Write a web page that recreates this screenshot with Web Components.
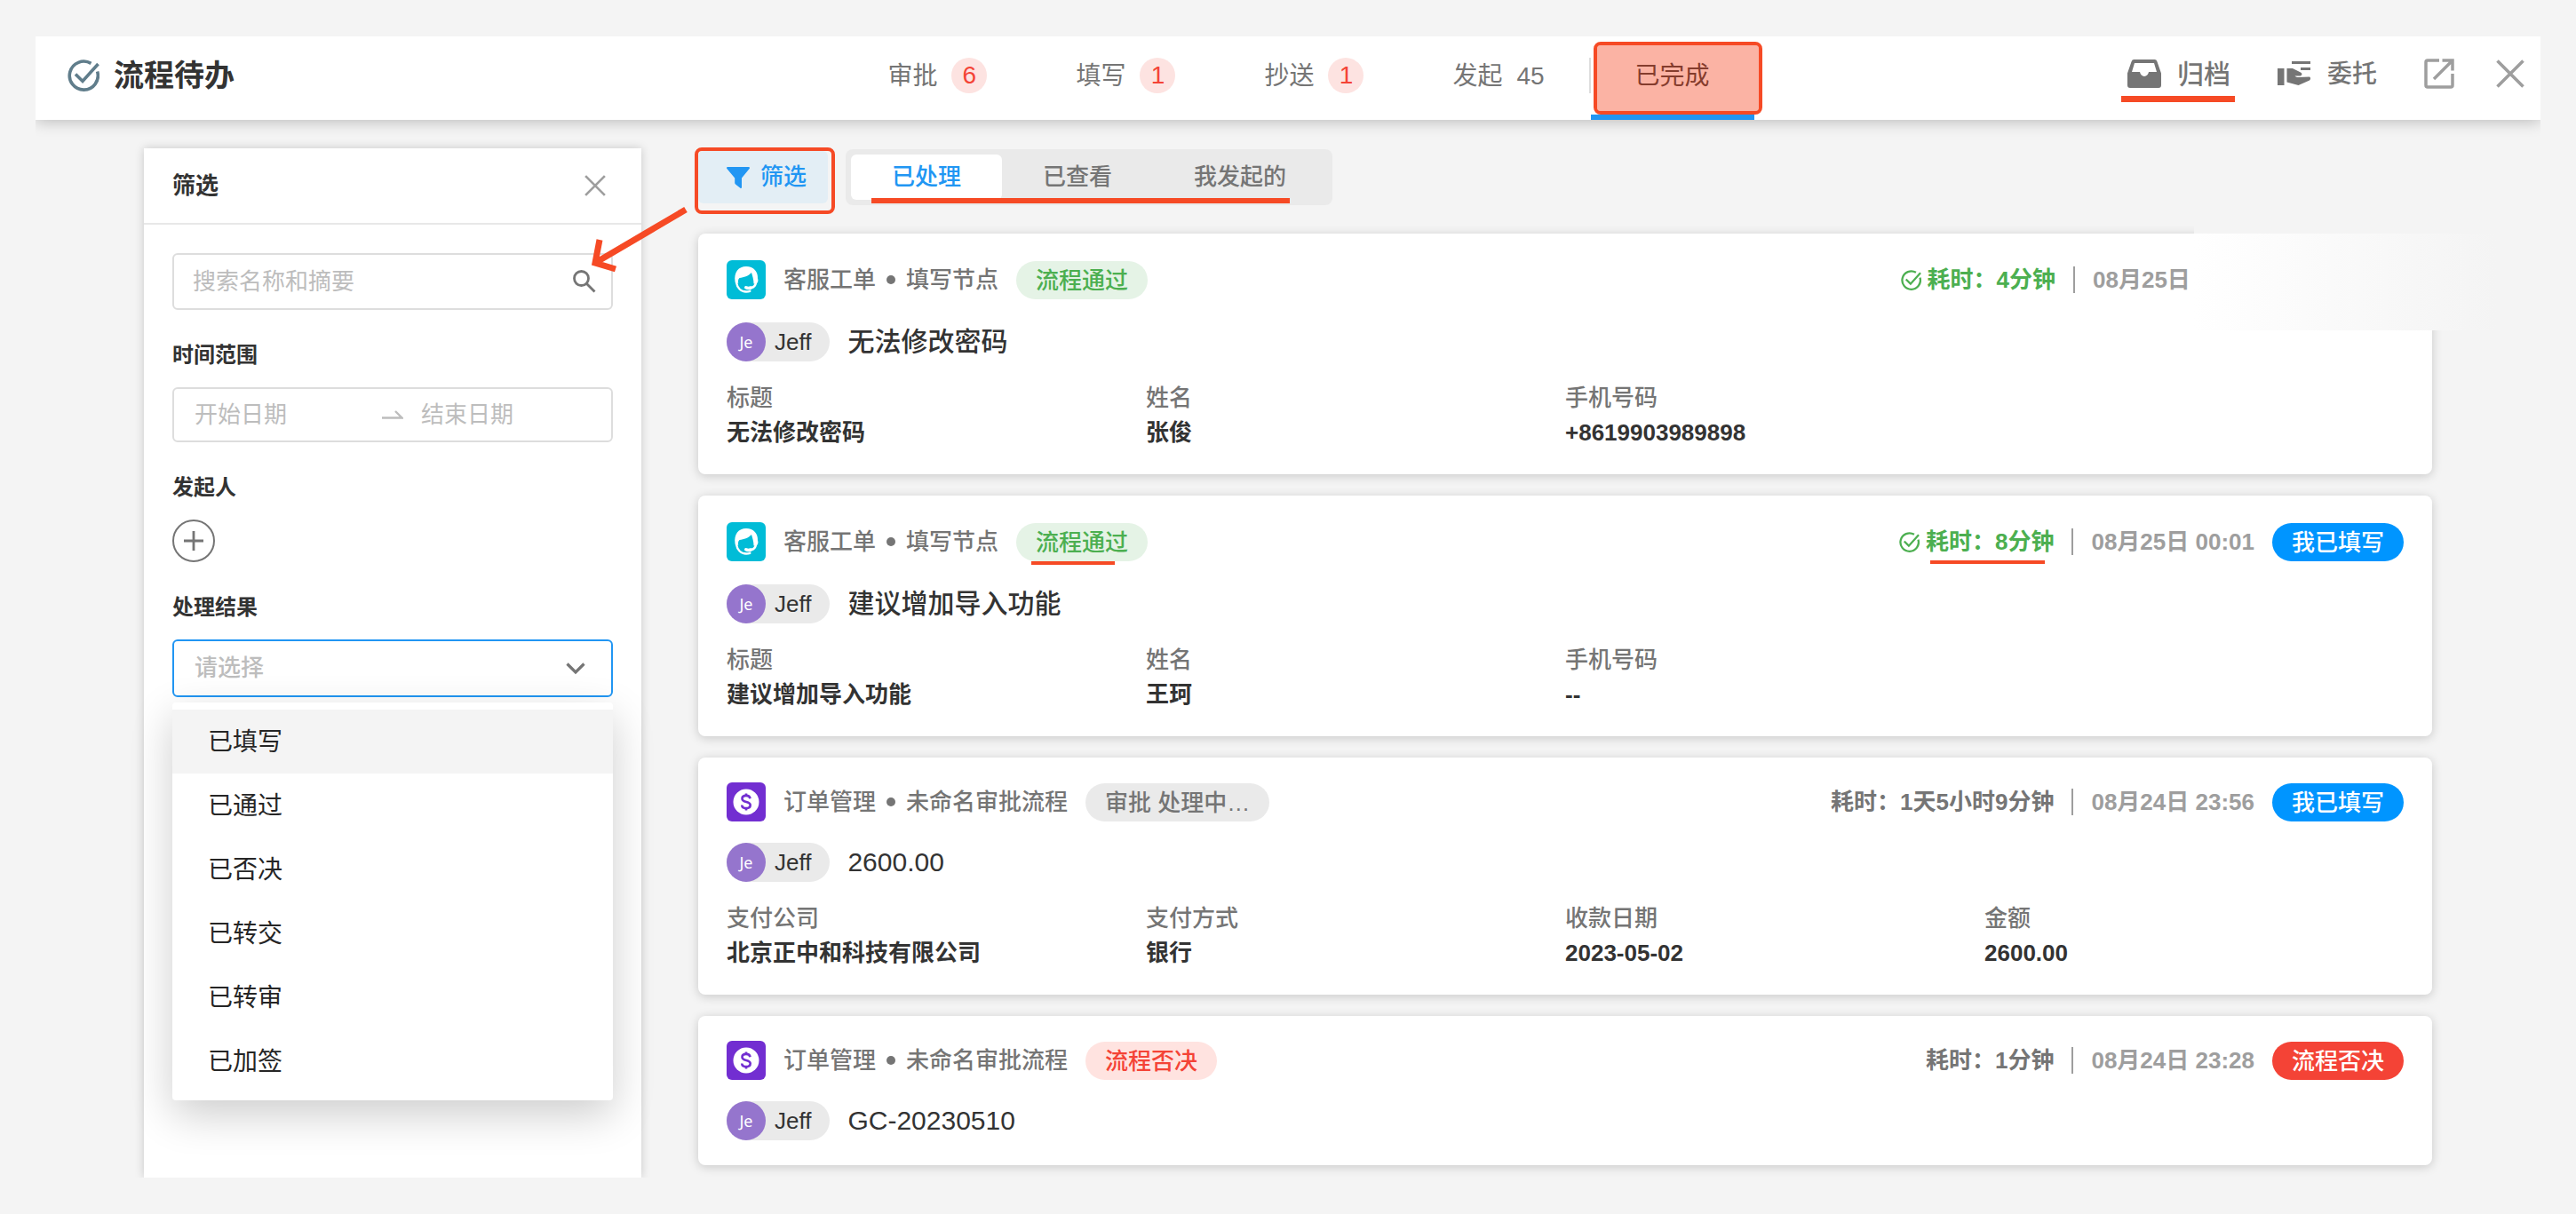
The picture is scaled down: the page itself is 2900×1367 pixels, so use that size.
<!DOCTYPE html>
<html lang="zh-CN">
<head>
<meta charset="utf-8">
<title>流程待办</title>
<style>
  body {
    margin: 0;
    padding: 41px 40px 40px;
    background: #f4f4f4;
    color: #333;
    font: 26px/39px "Liberation Sans", "Noto Sans CJK SC", sans-serif;
    --mark: #f64a25;
    --blue: #2196f3;
    --grey: #757575;
  }
  main { display: flex; gap: 64px; padding: 32px 122px 0; }
  filter-panel { flex: 0 0 560px; min-width: 0; }
  .list { flex: 1; min-width: 0; padding: 1px 0 14px; }
  .cards { display: flex; flex-direction: column; gap: 24px; margin-top: 32px; }
</style>
</head>
<body>
<todo-header heading="流程待办">
  <nav-tab label="审批" badge="6"></nav-tab>
  <nav-tab label="填写" badge="1"></nav-tab>
  <nav-tab label="抄送" badge="1"></nav-tab>
  <nav-tab label="发起" count="45"></nav-tab>
  <nav-tab label="已完成" active></nav-tab>
</todo-header>
<main>
  <filter-panel></filter-panel>
  <section class="list">
    <list-toolbar></list-toolbar>
    <div class="cards">
      <task-card icon="headset" app="客服工单" node="填写节点" status="流程通过" tone="green" user="Jeff" heading="无法修改密码" duration="4分钟" passed date="08月25日" faded>
        <task-field label="标题">无法修改密码</task-field>
        <task-field label="姓名">张俊</task-field>
        <task-field label="手机号码">+8619903989898</task-field>
      </task-card>
      <task-card icon="headset" app="客服工单" node="填写节点" status="流程通过" tone="green" user="Jeff" heading="建议增加导入功能" duration="8分钟" passed marked date="08月25日 00:01" result="我已填写" result-tone="blue">
        <task-field label="标题">建议增加导入功能</task-field>
        <task-field label="姓名">王珂</task-field>
        <task-field label="手机号码">--</task-field>
      </task-card>
      <task-card icon="dollar" app="订单管理" node="未命名审批流程" status="审批 处理中…" tone="grey" user="Jeff" heading="2600.00" duration="1天5小时9分钟" date="08月24日 23:56" result="我已填写" result-tone="blue">
        <task-field label="支付公司">北京正中和科技有限公司</task-field>
        <task-field label="支付方式">银行</task-field>
        <task-field label="收款日期">2023-05-02</task-field>
        <task-field label="金额">2600.00</task-field>
      </task-card>
      <task-card icon="dollar" app="订单管理" node="未命名审批流程" status="流程否决" tone="rose" user="Jeff" heading="GC-20230510" duration="1分钟" date="08月24日 23:28" result="流程否决" result-tone="red"></task-card>
    </div>
  </section>
</main>
<script>
const ICONS = {
  check: ['0 0 36 36', '<g fill="none" stroke="currentColor" stroke-width="3.6"><path d="M26.5 4.4A16 16 0 1 0 33.6 13.5"/><path d="M9 16.5l8 8L34.5 5"/></g>'],
  inbox: ['0 0 38 32', '<path fill="currentColor" fill-rule="evenodd" d="M7.5 0h23a3 3 0 0 1 2.9 2.2L38 15.5V29a3 3 0 0 1-3 3H3a3 3 0 0 1-3-3V15.500L4.600 2.200A3 3 0 0 1 7.500 0zM8 4L5 14h9c.6 2.800 2.400 5 5 5s4.400-2.200 5-5h9L30 4z"/>'],
  entrust: ['0 0 38 30', '<g fill="currentColor"><path d="M0 9h7.500v19H0zM16 1h21v3H16zM26 8h11v3H26z"/><path d="M10.500 9h6.500l9 4.500c2 1 2 3.500-.5 4h-6c1 1.300 2.500 1.500 4 1.500l12.500-.5c1.500.7 1.400 3 0 4L23.500 28l-13-3.500z"/></g>'],
  external: ['0 0 34 34', '<g fill="none" stroke="currentColor" stroke-width="3.500"><path d="M17 2H4a2 2 0 0 0-2 2v26a2 2 0 0 0 2 2h26a2 2 0 0 0 2-2V17"/><path d="M20.500 2H32v11.500M11 23L31 3"/></g>'],
  close: ['0 0 32 32', '<path fill="none" stroke="currentColor" stroke-width="3.600" d="M1.500 1.500l29 29M30.500 1.500l-29 29"/>'],
  search: ['0 0 26 26', '<g fill="none" stroke="currentColor" stroke-width="2.800"><circle cx="9.500" cy="9.500" r="8"/><path d="M15.500 15.500l9 9"/></g>'],
  swap: ['0 0 24 10', '<path fill="none" stroke="currentColor" stroke-width="2.400" d="M0 8.500h22.500L15 1"/>'],
  plus: ['0 0 22 22', '<path fill="none" stroke="currentColor" stroke-width="2.800" d="M11 0v22M0 11h22"/>'],
  chevron: ['0 0 22 14', '<path fill="none" stroke="currentColor" stroke-width="3.200" d="M1.500 1.500L11 11l9.500-9.500"/>'],
  funnel: ['0 0 26 24', '<path fill="currentColor" d="M1.200 0h23.600c1 0 1.500 1.200.8 2L17 12.500V23c0 .9-.9 1.300-1.600.7L10 19.500a2 2 0 0 1-.8-1.500v-5.500L.4 2C-.3 1.200.2 0 1.200 0z"/>'],
  headset: ['0 0 44 44', '<rect width="44" height="44" rx="6" fill="#00bcd7"/><path fill="#fff" d="M9.500 24C8 13.500 13.500 7 22 7s13.500 6 13 13.500c.8 2 .5 4-1 5.500l-3.500.5C30.500 21.500 29 17.500 28 14c-3.500 4-8.500 5.200-13.500 6-1.700 1.500-1.700 3.500-1.300 6z"/><g fill="none" stroke="#fff" stroke-linecap="round"><path stroke-width="2.400" d="M10.800 24.500C12 31 16 35.500 22 35.500c1.700 0 3-.2 4.300-.7"/><path stroke-width="2.600" d="M33 25c-.6 3.800-2.800 5.800-5.500 6"/><path stroke-width="3.600" d="M21.800 30.800c1.500.9 3.800.8 5.500.2"/></g>'],
  dollar: ['0 0 44 44', '<rect width="44" height="44" rx="6" fill="#722ed1"/><circle cx="22" cy="22" r="14.500" fill="#fff"/><g fill="none" stroke="#722ed1" stroke-width="2.600"><path d="M26.500 18.200c-.3-2-2-3.300-4.500-3.300-2.700 0-4.500 1.300-4.500 3.300 0 5 9.200 2.500 9.200 7.300 0 2.200-2 3.600-4.700 3.600-2.800 0-4.700-1.400-4.800-3.600"/><path d="M22 12.500v3M22 28.500v3"/></g>']
};
const define = (tag, css, render) => customElements.define(tag, class extends HTMLElement {
  connectedCallback() {
    if (this.shadowRoot) return;
    const base = '*{box-sizing:border-box}button,input,select{font:inherit;color:inherit;background:none;border:0;padding:0;margin:0;outline:0}button{cursor:pointer}a{color:inherit;text-decoration:none}app-icon{flex:none}';
    this.attachShadow({ mode: 'open' }).innerHTML =
      `<style>${base}${css}</style>${render(name => this.getAttribute(name), this)}`;
  }
});

define('app-icon', ':host{display:block}svg{display:block;width:100%;height:100%}',
  a => { const [box, body] = ICONS[a('name')]; return `<svg viewBox="${box}" aria-hidden="true">${body}</svg>`; });

define('nav-tab', `
  :host{display:block;height:94px}
  :host([active]){border-left:2px solid transparent;position:relative}
  :host([active])::before{content:"";position:absolute;left:-2px;top:24px;width:2px;height:40px;background:#ddd}
  a{display:flex;align-items:center;gap:16px;height:100%;padding:0 50px;border-bottom:6px solid transparent;color:var(--grey);font-size:28px}
  :host([active]) a{border-color:var(--blue);color:#333}
  .badge{width:40px;height:40px;border-radius:50%;background:#fde3e1;color:#f44336;text-align:center;line-height:40px}
  .box{position:absolute;left:3px;top:6px;width:190px;height:82px;border:4px solid var(--mark);border-radius:8px;background:rgba(246,74,37,.42);background-clip:padding-box;pointer-events:none}
`, (a, el) => `<a href="#">${a('label')}${a('badge') ? `<span class="badge">${a('badge')}</span>` : ''}${a('count') ? `<span>${a('count')}</span>` : ''}</a>${el.hasAttribute('active') ? '<span class="box"></span>' : ''}`);

define('todo-header', `
  :host{display:flex;align-items:center;height:94px;padding:0 12px 0 36px;background:#fff;box-shadow:0 2px 16px rgba(0,0,0,.24);clip-path:inset(0 0 -24px 0)}
  .brand{flex:1 1 0;display:flex;align-items:center;gap:16px;padding-bottom:6px}
  .brand app-icon{width:36px;height:36px;color:#607d8b}
  h1{margin:0;font-size:34px;line-height:44px;font-weight:700}
  nav{display:flex}
  .actions{flex:1 1 0;display:flex;align-items:center;justify-content:flex-end;height:84px;align-self:flex-start;color:var(--grey)}
  .act{position:relative;display:flex;align-items:center;gap:18px;font-size:30px;font-weight:500;margin-right:53px}
  .act.second{font-size:28px}
  .archive app-icon{width:38px;height:32px}
  .second app-icon{width:38px;height:30px}
  .archive::after{content:"";position:absolute;left:-7px;right:-5px;top:44px;height:7px;background:var(--mark)}
  .tool{color:#9e9e9e}
  .tool.ext{margin-right:41px}
  .ext app-icon{width:34px;height:34px}
  .end{padding:0 6px}
  .end app-icon{width:32px;height:32px}
`, a => `
  <div class="brand"><app-icon name="check"></app-icon><h1>${a('heading')}</h1></div>
  <nav><slot></slot></nav>
  <div class="actions">
    <button class="act archive"><app-icon name="inbox"></app-icon>归档</button>
    <button class="act second"><app-icon name="entrust"></app-icon>委托</button>
    <button class="tool ext" aria-label="新窗口打开"><app-icon name="external"></app-icon></button>
    <button class="tool end" aria-label="关闭"><app-icon name="close"></app-icon></button>
  </div>`);

define('option-menu', `
  :host{display:block;padding:8px 0;background:#fff;border-radius:4px;box-shadow:0 16px 48px rgba(0,0,0,.2)}
  ul{list-style:none;margin:0;padding:0}
  li{height:72px;padding:0 40px;line-height:74px;font-size:28px;color:#262626}
  li[aria-selected=true]{background:#f4f4f4}
`, a => `<ul role="listbox">${a('items').split(',').map((t, i) => `<li role="option" aria-selected="${i === 0}">${t}</li>`).join('')}</ul>`);

define('filter-panel', `
  :host{display:block;position:relative;background:#fff;box-shadow:0 0 10px rgba(0,0,0,.18);clip-path:inset(-20px -100px 0 -100px);z-index:1}
  header{display:flex;align-items:center;justify-content:space-between;height:86px;padding:0 40px 0 32px;border-bottom:2px solid #e8e8e8}
  h2,label,.label{display:block;margin:0;font-size:24px;line-height:34px;font-weight:700}
  h2{font-size:26px}
  header app-icon{width:24px;height:24px;color:#9e9e9e}
  form{display:flex;flex-direction:column;gap:34px;padding:32px}
  .group{display:flex;flex-direction:column;gap:19px;position:relative}
  .box{display:flex;align-items:center;gap:20px;height:62px;padding:0 23px;border:2px solid #ddd;border-radius:6px}
  .search,.pick{height:64px}
  .search{padding:0 17px 0 21px}
  .search app-icon{width:26px;height:26px;color:var(--grey)}
  .pick{height:65px;border-color:var(--blue)}
  .pick app-icon{width:22px;height:14px;color:var(--grey)}
  .pick app-icon{margin-right:6px}
  input,select{flex:1;min-width:0;height:56px;appearance:none}
  input::placeholder{color:#bdbdbd;opacity:1}
  select{color:#bdbdbd;font-weight:500}
  .swap{width:24px;height:10px;color:#bdbdbd}
  .add{display:flex;align-items:center;justify-content:center;width:48px;height:48px;border:2px solid var(--grey);border-radius:50%;color:var(--grey)}
  .add app-icon{width:22px;height:22px}
  option-menu{position:absolute;left:0;right:0;top:calc(100% + 6px)}
  .arrow{position:absolute;left:500px;top:60px;width:120px;height:90px;overflow:visible;pointer-events:none}
`, () => `
  <header><h2>筛选</h2><button aria-label="关闭筛选"><app-icon name="close"></app-icon></button></header>
  <form>
    <div class="box search"><input type="text" aria-label="搜索" placeholder="搜索名称和摘要"><app-icon name="search"></app-icon></div>
    <div class="group"><label for="from">时间范围</label>
      <div class="box"><input id="from" type="text" placeholder="开始日期"><app-icon class="swap" name="swap"></app-icon><input type="text" aria-label="结束日期" placeholder="结束日期"></div></div>
    <div class="group"><span class="label" id="who">发起人</span>
      <button class="add" type="button" aria-labelledby="who"><app-icon name="plus"></app-icon></button></div>
    <div class="group"><label for="result">处理结果</label>
      <div class="box pick"><select id="result"><option>请选择</option></select><app-icon name="chevron"></app-icon></div>
      <option-menu items="已填写,已通过,已否决,已转交,已转审,已加签"></option-menu></div>
  </form>
  <svg class="arrow" viewBox="0 0 120 90" aria-hidden="true"><path d="M110 9L8 69M13 43L8 69L31 76" fill="none" stroke="var(--mark)" stroke-width="7"/></svg>`);

define('list-toolbar', `
  :host{display:flex;align-items:center;gap:20px;font-weight:500}
  .filter{position:relative;display:flex;align-items:center;gap:12px;height:59px;padding:0 24px 0 32px;border-radius:6px;background:#e3eef5;color:var(--blue);font-weight:500}
  .filter app-icon{width:26px;height:24px}
  .filter::after{content:"";position:absolute;inset:-4px -8px -12px -4px;border:4px solid var(--mark);border-radius:8px}
  .tabs{position:relative;display:flex;height:63px;padding:6px;border-radius:8px;background:#eaeaea;color:var(--grey)}
  .tabs button{padding:0 46px;border-radius:6px;font-weight:500}
  .tabs .on{background:#fff;color:var(--blue)}
  .tabs::after{content:"";position:absolute;left:29px;right:48px;bottom:2px;height:6px;background:var(--mark)}
`, () => `
  <button class="filter"><app-icon name="funnel"></app-icon>筛选</button>
  <div class="tabs"><button class="on">已处理</button><button>已查看</button><button>我发起的</button></div>`);

define('status-pill', `
  :host{display:block;position:relative;height:43px;padding:0 22px;border-radius:22px;line-height:44px;font-weight:500;white-space:nowrap}
  :host([tone=green]){background:#e5f3e6;color:#4caf50}
  :host([tone=grey]){background:#eaeaea;color:var(--grey)}
  :host([tone=rose]){background:#ffe3e0;color:#f44336}
  :host([tone=blue]){background:#0095ff;color:#fff}
  :host([tone=red]){background:#f44336;color:#fff}
  :host([marked])::after{content:"";position:absolute;left:17px;top:100%;width:94px;height:4px;background:var(--mark)}
`, () => '<slot></slot>');

define('user-chip', `
  :host{display:flex;align-items:center;gap:10px;height:44px;padding-right:21px;border-radius:22px;background:#eaeaea}
  .avatar{width:44px;height:44px;border-radius:50%;background:#9575cd;color:#fff;font:18px/44px "Noto Sans",sans-serif;text-align:center}
`, a => `<span class="avatar">${a('name').slice(0, 2)}</span><span>${a('name')}</span>`);

define('task-field', `
  :host{display:block;min-width:0}
  .k{color:var(--grey);font-weight:500}
  .v{font-weight:700}
`, a => `<div class="k">${a('label')}</div><div class="v"><slot></slot></div>`);

define('task-card', `
  :host{display:block;position:relative;padding:28px 32px;border-radius:8px;background:#fff;box-shadow:0 2px 12px rgba(0,0,0,.18)}
  .top,.left,.right,.who,.time{display:flex;align-items:center}
  .top{justify-content:space-between;height:44px}
  :host([passed]) .top{height:48px}
  .left{gap:20px;color:var(--grey);font-weight:500}
  .left app-icon{width:44px;height:44px}
  .path{display:flex;align-items:center;gap:12px}
  .dot{width:10px;height:10px;border-radius:50%;background:var(--grey)}
  .right{gap:20px;color:#9e9e9e;font-weight:700}
  .time{gap:7px;color:var(--grey)}
  :host([passed]) .time{color:#4caf50}
  .time app-icon{width:23px;height:23px}
  .span{position:relative;line-height:42px}
  :host([marked]) .span::after{content:"";position:absolute;left:5px;width:129px;top:100%;height:4px;background:var(--mark)}
  .bar{width:2px;height:30px;background:#9e9e9e}
  .date{min-width:182px}
  .blank{width:148px}
  .who{gap:20px;margin-top:24px}
  h3{margin:0;font-size:30px;line-height:44px;font-weight:500}
  .fields{display:grid;grid-template-columns:repeat(4,1fr);margin:22px 0 -1px}
  .fade{position:absolute;top:-20px;right:-72px;width:340px;height:129px;background:linear-gradient(#f4f4f4,#f4f4f4) 0 0/100% 20px no-repeat,linear-gradient(90deg,#fff,#f4f4f4)}
`, (a, el) => `
  <div class="top">
    <div class="left">
      <app-icon name="${a('icon')}"></app-icon>
      <span class="path"><span>${a('app')}</span><span class="dot"></span><span>${a('node')}</span></span>
      <status-pill tone="${a('tone')}"${el.hasAttribute('marked') ? ' marked' : ''}>${a('status')}</status-pill>
    </div>
    <div class="right">
      <span class="time">${el.hasAttribute('passed') ? '<app-icon name="check"></app-icon>' : ''}<span class="span">耗时：${a('duration')}</span></span>
      <span class="bar"></span>
      <span class="date">${a('date')}</span>
      ${a('result') ? `<status-pill tone="${a('result-tone')}">${a('result')}</status-pill>` : '<span class="blank"></span>'}
    </div>
  </div>
  <div class="who"><user-chip name="${a('user')}"></user-chip><h3>${a('heading')}</h3></div>
  ${el.children.length ? '<div class="fields"><slot></slot></div>' : ''}
  ${el.hasAttribute('faded') ? '<span class="fade"></span>' : ''}`);
</script>
</body>
</html>
